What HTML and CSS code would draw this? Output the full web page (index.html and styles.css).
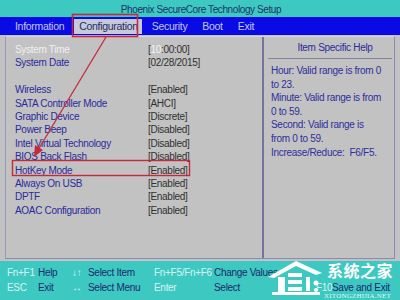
FILE: index.html
```html
<!DOCTYPE html>
<html>
<head>
<meta charset="utf-8">
<link rel="stylesheet" href="styles.css">
</head>
<body>
<div class="screen">
  <div class="title">Phoenix SecureCore Technology Setup</div>
  <nav class="menu">
    <span class="tab">Information</span>
    <span class="tab active">Configuration</span>
    <span class="tab">Security</span>
    <span class="tab">Boot</span>
    <span class="tab">Exit</span>
  </nav>
  <div class="main">
    <div class="settings">
      <div class="row selected"><span class="label">System Time</span><span class="value">[<span class="hl">10</span>:00:00]</span></div>
      <div class="row"><span class="label">System Date</span><span class="value">[02/28/2015]</span></div>
      <div class="row blank"></div>
      <div class="row"><span class="label">Wireless</span><span class="value">[Enabled]</span></div>
      <div class="row"><span class="label">SATA Controller Mode</span><span class="value">[AHCI]</span></div>
      <div class="row"><span class="label">Graphic Device</span><span class="value">[Discrete]</span></div>
      <div class="row"><span class="label">Power Beep</span><span class="value">[Disabled]</span></div>
      <div class="row"><span class="label">Intel Virtual Technology</span><span class="value">[Disabled]</span></div>
      <div class="row"><span class="label">BIOS Back Flash</span><span class="value">[Disabled]</span></div>
      <div class="row marked"><span class="label">HotKey Mode</span><span class="value">[Enabled]</span></div>
      <div class="row"><span class="label">Always On USB</span><span class="value">[Enabled]</span></div>
      <div class="row"><span class="label">DPTF</span><span class="value">[Enabled]</span></div>
      <div class="row"><span class="label">AOAC Configuration</span><span class="value">[Enabled]</span></div>
    </div>
    <div class="help">
      <div class="help-title">Item Specific Help</div>
      <div class="help-body">
        <p>Hour: Valid range is from 0<br>to 23.</p>
        <p>Minute: Valid range is from<br>0 to 59.</p>
        <p>Second: Valid range is<br>from 0 to 59.</p>
        <p>Increase/Reduce:&nbsp; F6/F5.</p>
      </div>
    </div>
  </div>
  <div class="footer">
    <span class="key">Fn+F1</span><span class="desc">Help</span>
    <span class="key">↓↑</span><span class="desc">Select Item</span>
    <span class="key">Fn+F5/Fn+F6</span><span class="desc">Change Values</span>
    <span class="key"></span><span class="desc"></span>
    <span class="key">ESC</span><span class="desc">Exit</span>
    <span class="key">↔</span><span class="desc">Select Menu</span>
    <span class="key">Enter</span><span class="desc">Select</span>
    <span class="key">F10</span><span class="desc">Save and Exit</span>
  </div>

  <svg class="annot" width="400" height="300" viewBox="0 0 400 300">
    <rect x="72.5" y="14.5" width="65" height="22" fill="none" stroke="#c8283c" stroke-width="1.6"/>
    <rect x="12.5" y="160.5" width="177" height="15" fill="none" stroke="#c8283c" stroke-width="1.4"/>
    <line x1="106" y1="37" x2="38" y2="150" stroke="#c8283c" stroke-width="1.3"/>
    <polygon points="34,157 35,145 43,150" fill="#c8283c"/>
  </svg>

  <div class="watermark">
    <svg class="wm-logo" width="58" height="40" viewBox="0 0 58 40">
      <path d="M2 20 L30 4 L56 16 L50 18 L30 9 L8 21 Z" fill="#fff"/>
      <rect x="12" y="20" width="7" height="18" fill="#fff"/>
      <rect x="22" y="16" width="14" height="4" fill="#fff"/>
      <rect x="22" y="23" width="14" height="4" fill="#fff"/>
      <rect x="22" y="30" width="14" height="4" fill="#fff"/>
      <rect x="40" y="20" width="4" height="14" fill="#fff"/>
      <circle cx="50" cy="26" r="2.5" fill="#fff"/>
      <circle cx="50" cy="33" r="2" fill="#fff"/>
      <rect x="6" y="35" width="48" height="3" fill="#fff"/>
    </svg>
    <div class="wm-text">
      <span class="wm-cn">系统之家</span>
      <span class="wm-en">XITONGZHIJIA.NET</span>
    </div>
  </div>
</div>
</body>
</html>
```
FILE: styles.css
```css
html, body {
  margin: 0;
  padding: 0;
}
body {
  width: 400px;
  height: 300px;
  overflow: hidden;
  background: #c2c2c2;
  font-family: "Liberation Sans", Arial, sans-serif;
  font-size: 10px;
  letter-spacing: -0.3px;
}
.screen {
  position: relative;
  width: 400px;
  height: 300px;
  display: flex;
  flex-direction: column;
}
.title {
  height: 17px;
  line-height: 19px;
  background: #3ec8c2;
  color: #1c3468;
  text-align: center;
  font-size: 10px;
  letter-spacing: -0.4px;
  padding-left: 2px;
}
.menu {
  height: 18px;
  background: #0a0ae4;
  display: flex;
  align-items: center;
  gap: 5px;
  padding-left: 10px;
}
.tab {
  color: #c4c8ec;
  padding: 0 5px;
  line-height: 15px;
  font-size: 10.5px;
}
.tab.active {
  background: #c8c8dc;
  color: #1e2c5c;
  padding: 0 4px 0 5px;
}
.main {
  margin: 1px 5px 0 5px;
  height: 221px;
  display: flex;
  border-top: 1px solid #d4d4e4;
  border-left: 1px solid #9a9ac0;
  border-right: 1px solid #8a8ab4;
  border-bottom: 1px solid #8a8ab4;
}
.settings {
  width: 258px;
  padding: 6px 0 0 9px;
  box-sizing: border-box;
  border-right: 2px solid #74749c;
}
.row {
  display: flex;
  height: 13.4px;
  line-height: 13.4px;
}
.label {
  width: 133px;
  color: #2a2a9c;
}
.value {
  color: #303030;
}
.selected .label {
  color: #f0f0f4;
}
.hl {
  color: #f4f4f8;
}
.help {
  flex: 1;
  padding: 4px 2px 0 4px;
}
.help-title {
  color: #2a2a9c;
  text-align: center;
  padding-left: 10px;
  line-height: 14px;
  padding-bottom: 3px;
  border-bottom: 1px solid #8080a8;
}
.help-body {
  padding: 5px 0 0 3px;
}
.help-body p {
  margin: 0;
  color: #2e2e9e;
  line-height: 13.6px;
  white-space: nowrap;
}
.footer {
  margin-top: 2px;
  flex: 1;
  background: #3ec8c2;
  display: grid;
  grid-template-columns: 31px 34px 16px 66px 60px 102px 16px 1fr;
  grid-auto-rows: 15px;
  align-content: start;
  align-items: center;
  padding: 4px 0 0 7px;
  line-height: 11px;
  white-space: nowrap;
  overflow: hidden;
}
.key {
  color: #d6f4f2;
}
.desc {
  color: #1a2a6a;
}
.annot {
  position: absolute;
  left: 0;
  top: 0;
  pointer-events: none;
}
.watermark {
  position: absolute;
  left: 266px;
  top: 257px;
  display: flex;
  align-items: flex-start;
}
.wm-logo {
  display: block;
}
.wm-text {
  display: flex;
  flex-direction: column;
  align-items: flex-end;
  padding-top: 3px;
}
.wm-cn {
  font-family: "Noto Sans CJK SC", sans-serif;
  font-weight: 700;
  font-size: 16px;
  line-height: 20px;
  letter-spacing: 0.5px;
  color: #fff;
}
.wm-en {
  font-family: "Liberation Serif", serif;
  font-size: 7px;
  line-height: 7px;
  letter-spacing: 0.2px;
  color: rgba(255, 255, 255, 0.85);
  margin-top: 13px;
  margin-right: 2px;
}
```
